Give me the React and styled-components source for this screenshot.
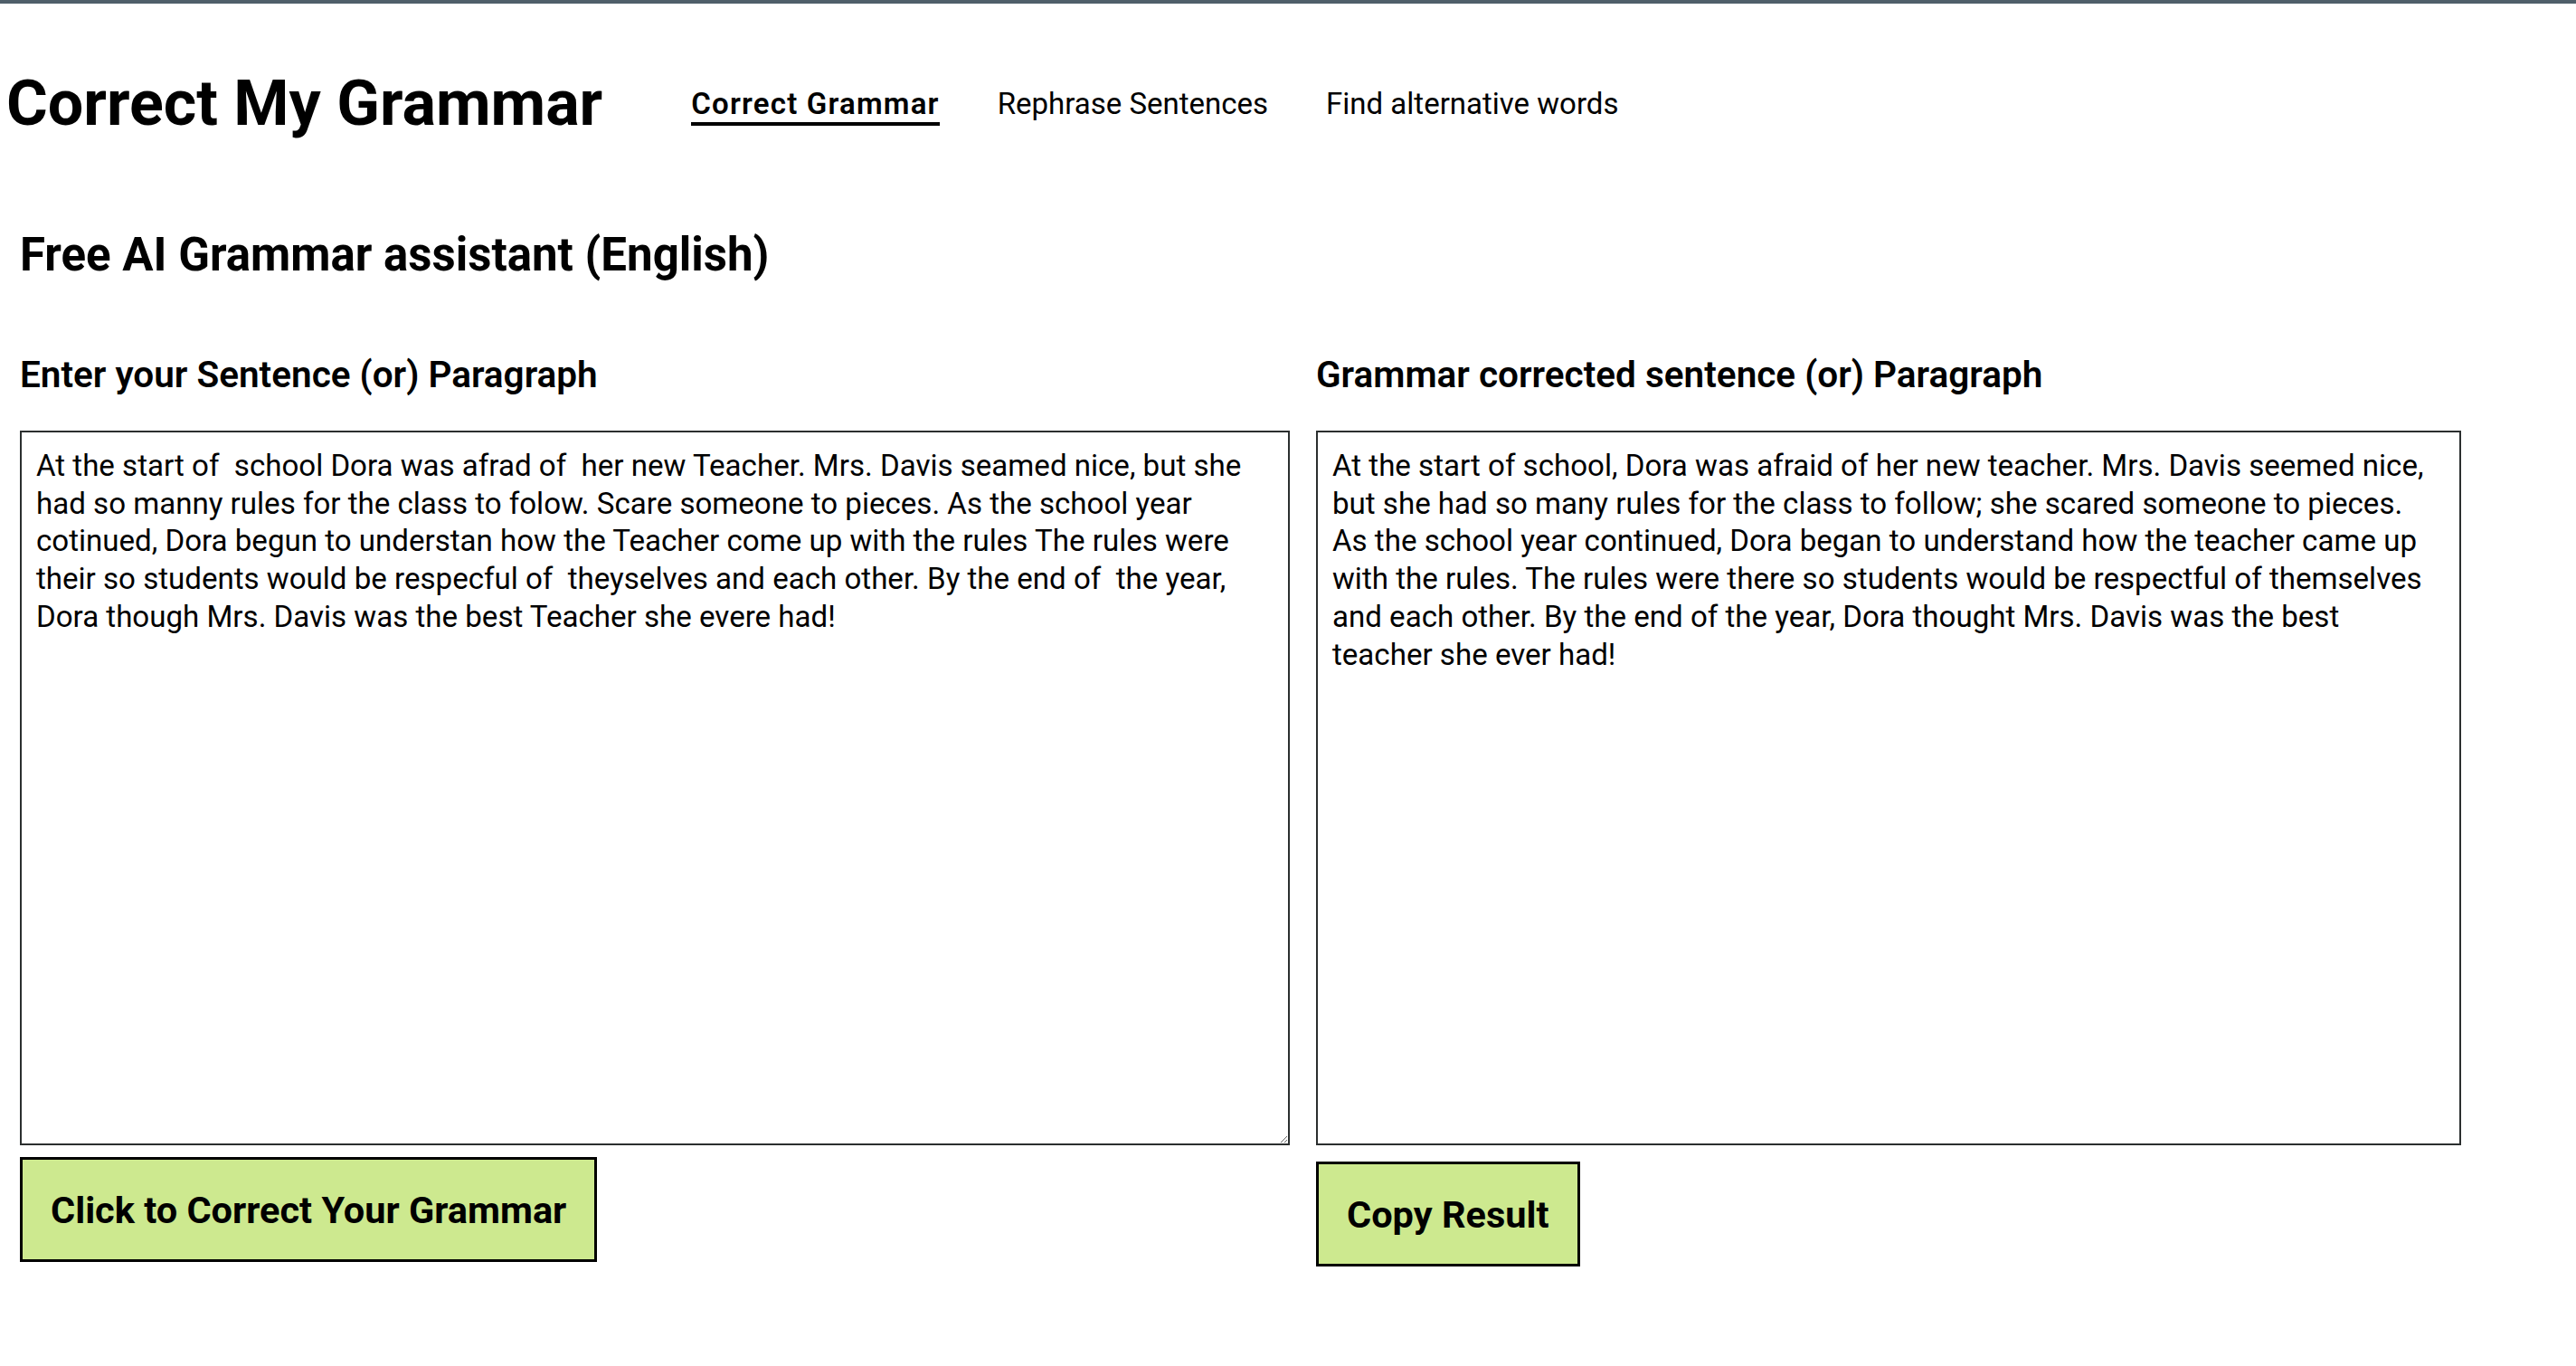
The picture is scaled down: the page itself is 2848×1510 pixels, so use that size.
import React from "react";
import styled, { createGlobalStyle } from "styled-components";

const inputText =
  "At the start of  school Dora was afrad of  her new Teacher. Mrs. Davis seamed nice, but she had so manny rules for the class to folow. Scare someone to pieces. As the school year cotinued, Dora begun to understan how the Teacher come up with the rules The rules were their so students would be respecful of  theyselves and each other. By the end of  the year, Dora though Mrs. Davis was the best Teacher she evere had!";

// corrected result, kept in the lines the result panel shows
const outputLines = [
  "At the start of school, Dora was afraid of her new teacher. Mrs. Davis seemed nice,",
  "but she had so many rules for the class to follow; she scared someone to pieces.",
  "As the school year continued, Dora began to understand how the teacher came up",
  "with the rules. The rules were there so students would be respectful of themselves",
  "and each other. By the end of the year, Dora thought Mrs. Davis was the best",
  "teacher she ever had!",
];

const GlobalStyle = createGlobalStyle`
  html, body {
    margin: 0;
    padding: 0;
    background: #ffffff;
  }
  body {
    font-family: "Roboto", "Liberation Sans", sans-serif;
    color: #000;
  }
  * {
    box-sizing: border-box;
  }
`;

const TopLine = styled.div`
  height: 4px;
  background: #4f5f6a;
`;

const Header = styled.header`
  display: flex;
  align-items: center;
  padding: 68px 0 0 7px;
`;

const Logo = styled.h1`
  margin: 0;
  font-size: 70px;
  font-weight: 700;
  line-height: 84px;
`;

const Nav = styled.nav`
  display: flex;
  gap: 64px;
  margin: 6px 0 0 98px;
`;

const NavLink = styled.a`
  font-size: 33px;
  line-height: 40px;
  color: #000;
  text-decoration: none;
  font-weight: ${(p) => (p.$active ? 600 : 400)};
  letter-spacing: ${(p) => (p.$active ? "1.2px" : "0")};
  border-bottom: 4px solid ${(p) => (p.$active ? "#000" : "transparent")};
  cursor: pointer;
`;

const Main = styled.main`
  padding: 0 22px;
`;

const PageTitle = styled.h2`
  margin: 95px 0 0;
  font-size: 51px;
  line-height: 62px;
  font-weight: 700;
`;

const Columns = styled.div`
  display: flex;
  align-items: flex-start;
  gap: 29px;
  margin-top: 76px;
`;

const Column = styled.section`
  width: ${(p) => p.$width}px;
  flex: none;
`;

const Label = styled.h3`
  margin: 0 0 37px;
  font-size: 40.5px;
  line-height: 50px;
  font-weight: 600;
`;

const InputArea = styled.textarea`
  display: block;
  width: 100%;
  height: 790px;
  margin: 0;
  padding: 16px;
  border: 2px solid #2b2f2f;
  border-radius: 0;
  font-family: inherit;
  font-size: 33.1px;
  line-height: 41.7px;
  color: #000;
  background: #fff;
  outline: none;
`;

const ResultBox = styled.div`
  width: 100%;
  height: 790px;
  padding: 16px;
  border: 2px solid #2b2f2f;
  font-size: 33.1px;
  line-height: 41.7px;
`;

const ResultLine = styled.span`
  display: block;
  white-space: nowrap;
`;

const ActionButton = styled.button`
  display: block;
  height: 116px;
  margin-top: ${(p) => p.$offset}px;
  padding: 0 31px;
  border: 3px solid #000;
  border-radius: 0;
  background: #cde98f;
  font-family: inherit;
  font-size: 41.5px;
  font-weight: 700;
  color: #000;
  cursor: pointer;
`;

export default function App() {
  return (
    <>
      <GlobalStyle />
      <TopLine />
      <Header>
        <Logo>Correct My Grammar</Logo>
        <Nav>
          <NavLink $active>Correct Grammar</NavLink>
          <NavLink>Rephrase Sentences</NavLink>
          <NavLink>Find alternative words</NavLink>
        </Nav>
      </Header>
      <Main>
        <PageTitle>Free AI Grammar assistant (English)</PageTitle>
        <Columns>
          <Column $width={1404}>
            <Label>Enter your Sentence (or) Paragraph</Label>
            <InputArea defaultValue={inputText} spellCheck={false} />
            <ActionButton $offset={13}>Click to Correct Your Grammar</ActionButton>
          </Column>
          <Column $width={1266}>
            <Label>Grammar corrected sentence (or) Paragraph</Label>
            <ResultBox>
              {outputLines.map((line) => (
                <ResultLine key={line}>{line}</ResultLine>
              ))}
            </ResultBox>
            <ActionButton $offset={18}>Copy Result</ActionButton>
          </Column>
        </Columns>
      </Main>
    </>
  );
}
